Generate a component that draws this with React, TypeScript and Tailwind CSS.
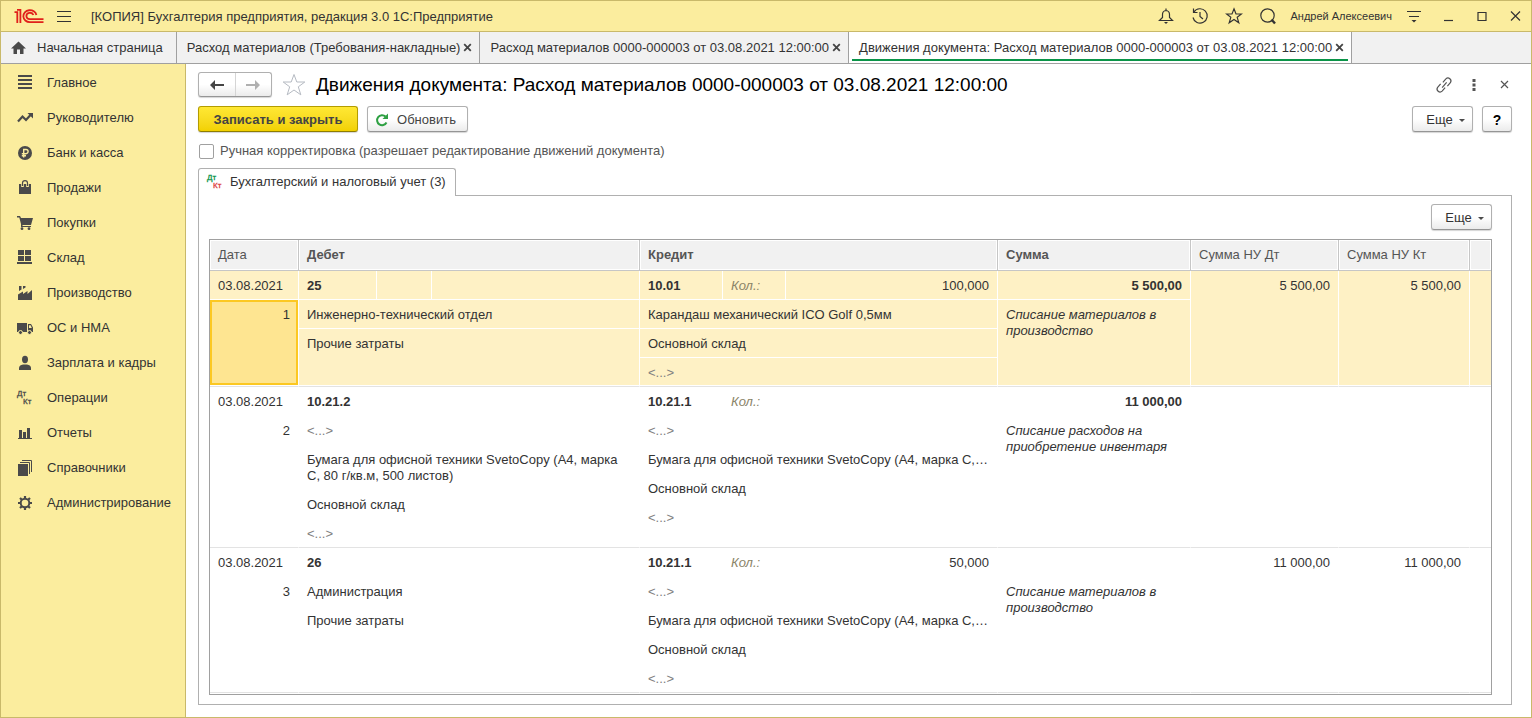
import type { ReactNode } from "react";
import clsx from "clsx";

type Line = { text: string; muted?: boolean };

type Entry = {
  date: string;
  num: number;
  debit: string;
  debitLines: Line[];
  credit: string;
  qty: string;
  creditLines: Line[];
  sum: string;
  note: string;
  nuDt: string;
  nuKt: string;
};

const empty: Line = { text: "<...>", muted: true };

const entries: Entry[] = [
  {
    date: "03.08.2021",
    num: 1,
    debit: "25",
    debitLines: [{ text: "Инженерно-технический отдел" }, { text: "Прочие затраты" }],
    credit: "10.01",
    qty: "100,000",
    creditLines: [
      { text: "Карандаш механический ICO Golf 0,5мм" },
      { text: "Основной склад" },
      empty,
    ],
    sum: "5 500,00",
    note: "Списание материалов в производство",
    nuDt: "5 500,00",
    nuKt: "5 500,00",
  },
  {
    date: "03.08.2021",
    num: 2,
    debit: "10.21.2",
    debitLines: [
      empty,
      { text: "Бумага для офисной техники SvetoCopy (А4, марка С, 80 г/кв.м, 500 листов)" },
      { text: "Основной склад" },
      empty,
    ],
    credit: "10.21.1",
    qty: "",
    creditLines: [
      empty,
      { text: "Бумага для офисной техники SvetoCopy (А4, марка С,…" },
      { text: "Основной склад" },
      empty,
    ],
    sum: "11 000,00",
    note: "Списание расходов на приобретение инвентаря",
    nuDt: "",
    nuKt: "",
  },
  {
    date: "03.08.2021",
    num: 3,
    debit: "26",
    debitLines: [{ text: "Администрация" }, { text: "Прочие затраты" }],
    credit: "10.21.1",
    qty: "50,000",
    creditLines: [
      empty,
      { text: "Бумага для офисной техники SvetoCopy (А4, марка С,…" },
      { text: "Основной склад" },
      empty,
    ],
    sum: "",
    note: "Списание материалов в производство",
    nuDt: "11 000,00",
    nuKt: "11 000,00",
  },
];

// ---------- icons ----------

const Glyph = ({ children }: { children: ReactNode }) => (
  <svg width="16" height="16" viewBox="0 0 16 16" fill="#4a4a4a" aria-hidden="true">
    {children}
  </svg>
);

const DtKt = ({ color }: { color?: boolean }) => (
  <svg width="20" height="22" viewBox="0 0 20 22" aria-hidden="true" className="shrink-0">
    <text x="2" y="9" fontSize="8" fill={color ? "#0a9448" : "#4a4a4a"} stroke={color ? "#0a9448" : "#4a4a4a"} strokeWidth="0.3">
      Дт
    </text>
    <text x="8" y="17" fontSize="8" fill={color ? "#dc4040" : "#4a4a4a"} stroke={color ? "#dc4040" : "#4a4a4a"} strokeWidth="0.3">
      Кт
    </text>
  </svg>
);

const Logo = () => (
  <svg width="30" height="16" viewBox="0 0 30 16" fill="none" stroke="#e0201b" strokeWidth="1.8" aria-label="1С">
    <path d="M0.5 4.200H3.300V15M3 1.800H6.400V15" />
    <path d="M22.400 7A6.600 6 0 1 0 15.800 14.200H29.500" />
    <path d="M19.400 7A3.600 3.200 0 1 0 15.800 11.200H29.500" />
  </svg>
);

const CloseX = () => (
  <svg width="9" height="9" viewBox="0 0 9 9" fill="none" stroke="#444" strokeWidth="1.8" aria-hidden="true">
    <path d="M1.200 1.200 7.800 7.800M7.800 1.200 1.200 7.800" />
  </svg>
);

const menu: { label: string; icon: ReactNode }[] = [
  {
    label: "Главное",
    icon: (
      <Glyph>
        <path d="M1 0h14v2H1zM1 4h14v2H1zM1 8h14v2H1zM1 12h14v2H1z" />
      </Glyph>
    ),
  },
  {
    label: "Руководителю",
    icon: (
      <Glyph>
        <path d="M1 11.500 5.500 6.500 9 10 13.500 5" fill="none" stroke="#4a4a4a" strokeWidth="2.200" />
        <path d="M10.500 3H16v5.500z" />
      </Glyph>
    ),
  },
  {
    label: "Банк и касса",
    icon: (
      <Glyph>
        <circle cx="8" cy="8" r="7" />
        <path d="M6.700 12.500V4.500H9a2 2 0 0 1 0 4.200H4.800M4.800 10.700H9" fill="none" stroke="#fbed9e" strokeWidth="1.400" />
      </Glyph>
    ),
  },
  {
    label: "Продажи",
    icon: (
      <Glyph>
        <path d="M2 4h12v10H2z" />
        <path d="M5.500 7V3Q5.500 .600 8 .600T10.500 3V7" fill="none" stroke="#fbed9e" strokeWidth="2.600" />
        <path d="M5.500 6V3Q5.500 .600 8 .600T10.500 3V6" fill="none" stroke="#4a4a4a" strokeWidth="1.200" />
      </Glyph>
    ),
  },
  {
    label: "Покупки",
    icon: (
      <Glyph>
        <path d="M0 1h3l1 2h12l-2 7H5.500v1H14v1H4V9L2.300 2.500H0z" />
        <circle cx="5" cy="13.700" r="1.400" />
        <circle cx="12" cy="13.700" r="1.400" />
      </Glyph>
    ),
  },
  {
    label: "Склад",
    icon: (
      <Glyph>
        <path d="M1 0h6v5H1zM8 0h6v5H8zM1 6h6v5H1zM8 6h6v5H8zM0 12h15v2H0z" />
      </Glyph>
    ),
  },
  {
    label: "Производство",
    icon: (
      <Glyph>
        <path d="M1 15V9.500l5-3v2.500l4.500-3v3L15 5v10zM2 1h2.500v3.500L2 6zM6 1h2.500v1.500L6 4z" />
      </Glyph>
    ),
  },
  {
    label: "ОС и НМА",
    icon: (
      <Glyph>
        <path d="M0 3h10v9H0zM11 4h3l2 3.500V12h-5z" />
        <path d="M12 5.200h1.600L14.800 8H12z" fill="#fbed9e" />
        <circle cx="3.500" cy="12.500" r="2" stroke="#fbed9e" />
        <circle cx="12.500" cy="12.500" r="2" stroke="#fbed9e" />
      </Glyph>
    ),
  },
  {
    label: "Зарплата и кадры",
    icon: (
      <Glyph>
        <ellipse cx="8" cy="4.500" rx="3" ry="3.700" />
        <path d="M2 15v-2.500Q2.500 10 6 9.500h4q3.500.5 4 3V15z" />
      </Glyph>
    ),
  },
  { label: "Операции", icon: <DtKt /> },
  {
    label: "Отчеты",
    icon: (
      <Glyph>
        <path d="M2 5h3v8H2zM6 7h3v6H6zM10 3h3v10h-3zM1 13h14v1H1z" />
      </Glyph>
    ),
  },
  {
    label: "Справочники",
    icon: (
      <Glyph>
        <path d="M1 4h10v12H1z" />
        <path d="M3 2.500h9.500V14M5 .5h9.500V12" fill="none" stroke="#4a4a4a" />
      </Glyph>
    ),
  },
  {
    label: "Администрирование",
    icon: (
      <Glyph>
        <circle cx="8" cy="8" r="4.300" fill="none" stroke="#4a4a4a" strokeWidth="2" />
        <path
          d="M8 1v2.500M8 12.500V15M1 8h2.500M12.500 8H15M3 3l1.800 1.800M11.200 11.200 13 13M13 3l-1.800 1.800M4.800 11.200 3 13"
          stroke="#4a4a4a"
          strokeWidth="2.200"
        />
      </Glyph>
    ),
  },
];

const windowTabs = [
  { label: "Расход материалов (Требования-накладные)" },
  { label: "Расход материалов 0000-000003 от 03.08.2021 12:00:00" },
  { label: "Движения документа: Расход материалов 0000-000003 от 03.08.2021 12:00:00", active: true },
];

const TitleButton = ({ label, children }: { label: string; children: ReactNode }) => (
  <button aria-label={label} className="flex h-full w-[34px] shrink-0 items-center justify-center last:w-8">
    <svg width="18" height="18" viewBox="0 0 18 18" fill="none" stroke="#333" strokeWidth="1.200" aria-hidden="true">
      {children}
    </svg>
  </button>
);

const TitleBar = () => (
  <header className="flex h-[31px] items-center border-b border-[#c9b96a] bg-[#fbed9e]">
    <div className="pl-[13px]">
      <Logo />
    </div>
    <button aria-label="Меню" className="ml-3 flex h-full items-center">
      <svg width="16" height="14" viewBox="0 0 16 14" stroke="#333" strokeWidth="1" aria-hidden="true">
        <path d="M1 2.500H15M1 7.500H15M1 12.500H15" />
      </svg>
    </button>
    <h2 className="ml-[19px] pt-px">[КОПИЯ] Бухгалтерия предприятия, редакция 3.0 1С:Предприятие</h2>
    <div className="ml-auto flex h-full items-center">
      <TitleButton label="Уведомления">
        <path d="M2.500 13.500H15.500L12.500 10.500V7.500Q12.500 4 9 3.500 5.500 4 5.500 7.500V10.500zM9 3.500V1.500" />
        <path d="M7 15h4l-2 2z" fill="#333" stroke="none" />
      </TitleButton>
      <TitleButton label="История">
        <path d="M3 5A7.200 7.200 0 1 1 2 10.500M2.500 1.500V5.500H6.500M9 5v4.500l3 2.500" />
      </TitleButton>
      <TitleButton label="Избранное">
        <path d="M9 1.800 11 7h5.500L12.200 10.300 13.800 15.800 9 12.500 4.200 15.800 5.800 10.300 1.500 7H7z" />
      </TitleButton>
      <TitleButton label="Поиск">
        <circle cx="8.500" cy="8.500" r="6.700" />
        <path d="M12.500 12.500 16 16.500" strokeWidth="2.400" />
      </TitleButton>
      <span className="px-[5px] text-[11px]">Андрей Алексеевич</span>
      <TitleButton label="Настройки">
        <path d="M2 4.500H16M4 9.500H14" />
        <path d="M6.500 13h5L9 15.500z" fill="#333" stroke="none" />
      </TitleButton>
      <TitleButton label="Свернуть">
        <path d="M5 13.500H14" />
      </TitleButton>
      <TitleButton label="Развернуть">
        <path d="M5 5.500H13V13.500H5z" />
      </TitleButton>
      <TitleButton label="Закрыть">
        <path d="M5 4.500 14 13.500M14 4.500 5 13.500" />
      </TitleButton>
    </div>
  </header>
);

const TabBar = () => (
  <nav className="flex h-8 border-b border-[#a0a0a0] bg-[#f1f1f1]">
    <a href="#home" className="flex items-center gap-[11px] border-r border-[#a0a0a0] pr-[13px] pl-2.5">
      <svg width="15" height="14" viewBox="0 0 15 14" fill="#4a4a4a" aria-hidden="true">
        <path d="M7.500 0.500 15 7.500H12.500V13H9V8.500H6V13H2.500V7.500H0z" />
      </svg>
      Начальная страница
    </a>
    {windowTabs.map((tab) => (
      <div
        key={tab.label}
        className={clsx("flex border-r border-[#a0a0a0]", tab.active && "bg-white px-[3px] pb-0.5")}
      >
        <div
          className={clsx(
            "flex items-center gap-[3px]",
            tab.active ? "border-b-2 border-[#0a9448] pt-1 pr-1 pl-[7px]" : "pr-[7px] pl-2.5",
          )}
        >
          <a href="#tab" className="whitespace-nowrap">
            {tab.label}
          </a>
          <button aria-label="Закрыть вкладку">
            <CloseX />
          </button>
        </div>
      </div>
    ))}
  </nav>
);

const Sidebar = () => (
  <aside className="w-[185px] shrink-0 border-r border-[#c9b96a] bg-[#fbed9e] pt-px">
    {menu.map((item) => (
      <a key={item.label} href="#section" className="flex h-[35px] items-center gap-3 pl-3.5">
        <span className="flex w-5 justify-center">{item.icon}</span>
        {item.label}
      </a>
    ))}
  </aside>
);

// ---------- form ----------

const buttonStyle =
  "flex items-center justify-center rounded-[3px] border border-[#b0b0b0] border-b-[#959595] bg-linear-to-b from-white from-50% to-[#ebebeb] shadow-[0_1px_1px_#d5d5d5]";

const MoreButton = () => (
  <button className={clsx(buttonStyle, "h-[26px] w-[61px] gap-1.5 pt-0.5 pl-1.5")}>
    Еще
    <svg width="6" height="3" viewBox="0 0 6 3" fill="#4a4a4a" aria-hidden="true">
      <path d="M0 0h6L3 3z" />
    </svg>
  </button>
);

const FormHeader = () => (
  <div className="flex items-center">
    <div className={clsx(buttonStyle, "h-[25px] w-[74px]")}>
      <button aria-label="Назад" className="flex h-full flex-1 items-center justify-center border-r border-[#d5d5d5]">
        <svg width="14" height="10" viewBox="0 0 14 10" aria-hidden="true">
          <path d="M5 0v4h9v2H5v4L0 5z" fill="#444" />
        </svg>
      </button>
      <button aria-label="Вперед" className="flex h-full flex-1 items-center justify-center">
        <svg width="14" height="10" viewBox="0 0 14 10" aria-hidden="true">
          <path d="M9 0v4H0v2h9v4l5-5z" fill="#b0b0b0" />
        </svg>
      </button>
    </div>
    <button aria-label="В избранное" className="ml-2.5">
      <svg width="24" height="24" viewBox="0 0 24 24" fill="none" stroke="#b5bac2" aria-hidden="true">
        <path d="M12 1.500 14.800 9H22.800L16.300 13.800 18.800 21.800 12 17 5.200 21.800 7.700 13.800 1.200 9H9.200z" />
      </svg>
    </button>
    <h1 className="ml-2.5 text-[19px] leading-6 text-black">
      Движения документа: Расход материалов 0000-000003 от 03.08.2021 12:00:00
    </h1>
    <div className="ml-auto flex items-center">
      <button aria-label="Ссылка">
        <svg width="18" height="18" viewBox="0 0 24 24" fill="none" stroke="#555" strokeWidth="1.600" aria-hidden="true">
          <path d="M9.500 15.500 15.500 8.500" />
          <path d="M10.500 8.500 14.500 3.800a4 4 0 0 1 6 5.200L16.500 13.500" />
          <path d="M13.500 15.500 9.500 20.200a4 4 0 0 1-6-5.200L7.500 10.500" />
        </svg>
      </button>
      <button aria-label="Действия" className="ml-[19px]">
        <svg width="4" height="12" viewBox="0 0 4 12" fill="#555" aria-hidden="true">
          <path d="M.5 0h3v3h-3zM.5 4.500h3v3h-3zM.5 9h3v3h-3z" />
        </svg>
      </button>
      <button aria-label="Закрыть форму" className="mr-[3px] ml-6">
        <svg width="9" height="9" viewBox="0 0 9 9" fill="none" stroke="#555" strokeWidth="1.200" aria-hidden="true">
          <path d="M1 1 8 8M8 1 1 8" />
        </svg>
      </button>
    </div>
  </div>
);

const Toolbar = () => (
  <div className="mt-[9px] flex">
    <button className="h-[26px] w-40 rounded-[3px] border border-[#b39c00] border-b-[#8f7d00] bg-linear-to-b from-[#ffe833] to-[#f2d100] pt-0.5 font-bold text-[#444] shadow-[0_1px_1px_#d5d5d5]">
      Записать и закрыть
    </button>
    <button className={clsx(buttonStyle, "ml-[9px] h-[26px] w-[101px] gap-2 pt-0.5 pr-1 text-[#444]")}>
      <svg width="14" height="14" viewBox="0 0 14 14" aria-hidden="true">
        <path d="M11.500 9.500A5 5 0 1 1 10.500 3.500" fill="none" stroke="#2ea043" strokeWidth="2" />
        <path d="M13 .5V6H7.500z" fill="#2ea043" />
      </svg>
      Обновить
    </button>
    <div className="ml-auto flex gap-[9px]">
      <MoreButton />
      <button aria-label="Справка" className={clsx(buttonStyle, "h-[26px] w-[30px] pt-0.5 text-sm font-bold text-black")}>
        ?
      </button>
    </div>
  </div>
);

// one 29px line of an entry, the last one gives a pixel to the divider below
const Cell = ({ children, className }: { children?: ReactNode; className?: string }) => (
  <div className={clsx("min-h-[28px] border-b border-white px-2 pt-[7px] last:flex-1", className)}>{children}</div>
);

const Stack = ({ children }: { children: ReactNode }) => (
  <td className="h-px border-r border-b border-r-white border-b-[#e3e3e3] p-0 align-top last:border-r-0">
    <div className="flex h-full flex-col">{children}</div>
  </td>
);

const Lines = ({ lines }: { lines: Line[] }) => (
  <>
    {lines.map((line, i) => (
      <Cell
        key={i}
        className={clsx(i === lines.length - 1 ? "pb-1" : "pb-[5px]", line.muted && "text-[#808080]")}
      >
        {line.text}
      </Cell>
    ))}
  </>
);

const EntryRow = ({ entry, selected }: { entry: Entry; selected: boolean }) => (
  <tr className={clsx(selected && "bg-[#fef1c5]")}>
    <Stack>
      <Cell className="pb-[5px]">{entry.date}</Cell>
      {selected ? (
        <div className="flex-1 border-b border-white">
          <div className="h-full border-2 border-[#fcc822] bg-[#fee591] px-1.5 pt-[5px] text-right">{entry.num}</div>
        </div>
      ) : (
        <Cell className="text-right">{entry.num}</Cell>
      )}
    </Stack>
    <Stack>
      <div className="flex font-bold">
        <Cell className="w-[78px] border-r pb-[5px]">{entry.debit}</Cell>
        <Cell className="w-[55px] border-r" />
        <Cell className="flex-1" />
      </div>
      <Lines lines={entry.debitLines} />
    </Stack>
    <Stack>
      <div className="flex">
        <Cell className="w-[83px] border-r pb-[5px] font-bold">{entry.credit}</Cell>
        <Cell className="w-[63px] border-r pb-[5px] text-[#8a8468] italic">Кол.:</Cell>
        <Cell className="flex-1 text-right">{entry.qty}</Cell>
      </div>
      <Lines lines={entry.creditLines} />
    </Stack>
    <Stack>
      <Cell className="h-[29px] text-right font-bold">{entry.sum}</Cell>
      <Cell className="italic">{entry.note}</Cell>
    </Stack>
    <Stack>
      <Cell className="text-right">{entry.nuDt}</Cell>
    </Stack>
    <Stack>
      <Cell className="text-right">{entry.nuKt}</Cell>
    </Stack>
    <Stack>
      <Cell />
    </Stack>
  </tr>
);

const columns = [
  { title: "Дата", width: "w-[89px]" },
  { title: "Дебет", width: "w-[341px]", bold: true },
  { title: "Кредит", width: "", bold: true },
  { title: "Сумма", width: "w-[193px]", bold: true },
  { title: "Сумма НУ Дт", width: "w-[148px]" },
  { title: "Сумма НУ Кт", width: "w-[131px]" },
  { title: "", width: "w-[21px]" },
];

const EntriesTable = () => (
  <div className="mt-[9px] flex-1 border border-[#a0a0a0]">
    <table className="w-full table-fixed border-separate border-spacing-0 leading-4">
      <thead>
        <tr>
          {columns.map((col) => (
            <th
              key={col.title}
              className={clsx(
                "h-[31px] border-r border-b border-[#c6c6c6] bg-[#f1f1f1] px-2 py-0 text-left text-[#555] shadow-[inset_0_0_0_1px_#fff] last:border-r-0",
                col.width,
                col.bold ? "font-bold" : "font-normal",
              )}
            >
              {col.title}
            </th>
          ))}
        </tr>
      </thead>
      <tbody>
        {entries.map((entry) => (
          <EntryRow key={entry.num} entry={entry} selected={entry.num === 1} />
        ))}
      </tbody>
    </table>
  </div>
);

const App = () => {
  return (
    <div className="flex min-h-screen flex-col border border-[#c9b96a] bg-white font-['Liberation_Sans',Arial,sans-serif] text-[13px] leading-4 text-[#333]">
      <TitleBar />
      <TabBar />
      <div className="flex flex-1">
        <Sidebar />
        <main className="flex flex-1 flex-col pt-2 pr-[19px] pb-3 pl-3">
          <FormHeader />
          <Toolbar />
          <label className="mt-[11px] flex h-4 items-center gap-1.5 self-start text-[#555]">
            <input
              type="checkbox"
              className="ml-px size-[15px] appearance-none rounded-[2px] border border-[#a0a0a0] bg-white checked:bg-[#ffe833]"
            />
            Ручная корректировка (разрешает редактирование движений документа)
          </label>
          <button className="relative z-10 mt-[9px] -mb-px flex h-7 items-center gap-[5px] self-start rounded-t-[3px] border border-b-0 border-[#b0b0b0] bg-white pr-[9px] pb-px pl-1.5">
            <DtKt color />
            Бухгалтерский и налоговый учет (3)
          </button>
          <section className="flex flex-1 flex-col border border-[#b0b0b0] pt-2 pr-[19px] pb-[9px] pl-2.5">
            <div className="flex justify-end">
              <MoreButton />
            </div>
            <EntriesTable />
          </section>
        </main>
      </div>
    </div>
  );
};

export default App;
